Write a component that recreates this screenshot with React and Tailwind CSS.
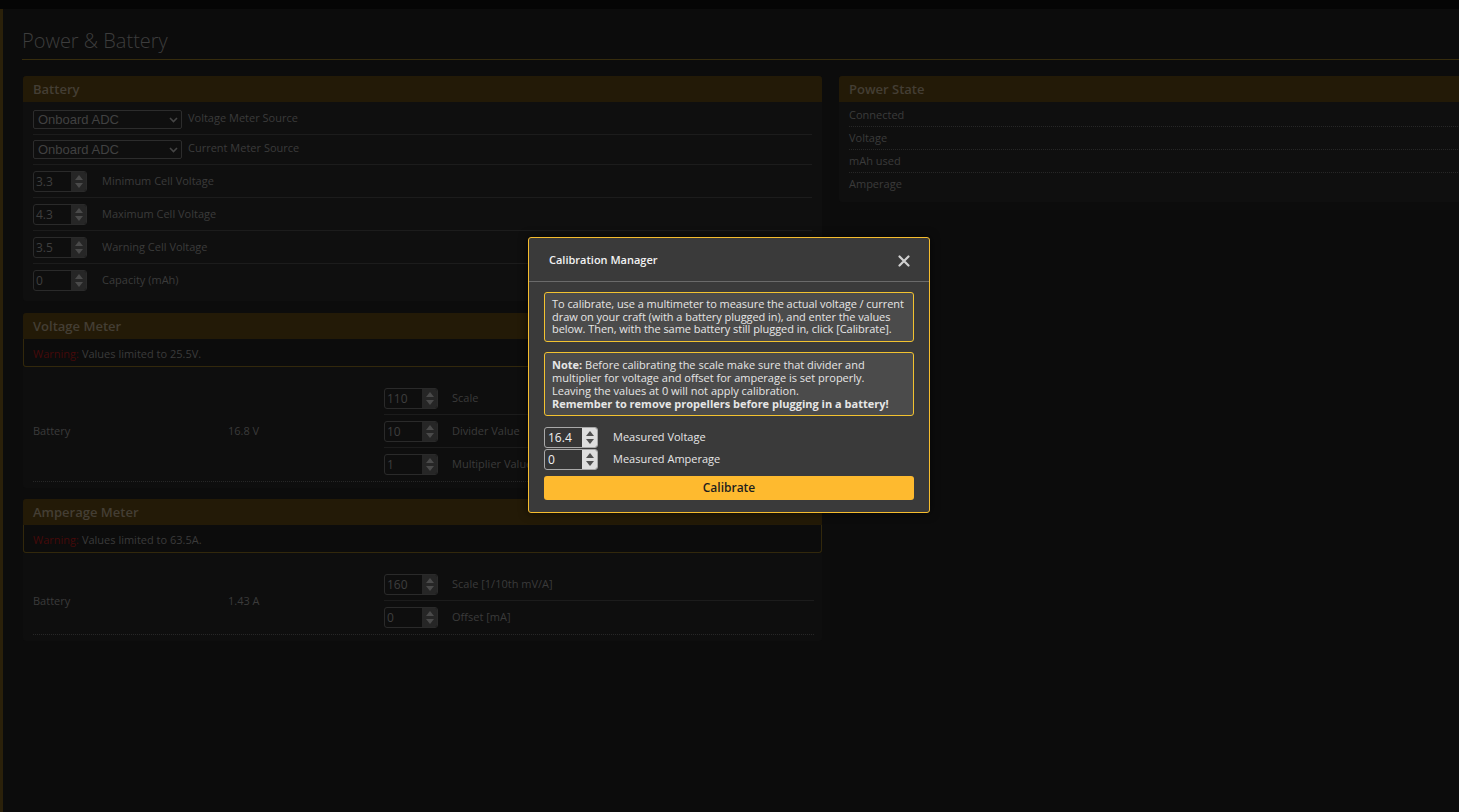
import React from "react";

const Spin = ({ light }) => (
  <div
    className={`flex flex-col items-center justify-center gap-[3px] w-[15px] self-stretch ${
      light ? "bg-[#dedede]" : "bg-[#262626]"
    }`}
  >
    <svg width="8" height="5" viewBox="0 0 8 5">
      <path d="M0 5 L4 0 L8 5Z" fill={light ? "#505050" : "#4a4a4a"} />
    </svg>
    <svg width="8" height="5" viewBox="0 0 8 5">
      <path d="M0 0 L8 0 L4 5Z" fill={light ? "#505050" : "#4a4a4a"} />
    </svg>
  </div>
);

const NumBox = ({ value }) => (
  <div className="flex h-[21px] w-[54px] shrink-0 rounded-[3px] border border-[#2a2a2a] bg-[#0e0e0e] overflow-hidden">
    <span className="flex-1 pl-[2px] text-[12px] leading-[19px] text-[#3e3e3e]">{value}</span>
    <Spin />
  </div>
);

const SelectBox = () => (
  <div className="flex items-center justify-between h-[19px] w-[149px] shrink-0 rounded-[2px] border border-[#2c2c2c] bg-[#0f0f0f] pl-[4px] pr-[3px]">
    <span className="font-['Liberation_Sans',sans-serif] text-[13px] text-[#414141] leading-none">Onboard ADC</span>
    <svg width="9" height="6" viewBox="0 0 9 6">
      <path d="M1 1 L4.5 4.5 L8 1" stroke="#454545" strokeWidth="1.6" fill="none" />
    </svg>
  </div>
);

const Header = ({ children }) => (
  <div className="h-[26px] bg-[#231a07] px-[10px] pt-[1px] flex items-center text-[13px] font-semibold text-[#443e34] rounded-t-[3px]">
    {children}
  </div>
);

const Warn = ({ text }) => (
  <div className="h-[28px] border-x border-b border-[#32280c] rounded-b-[3px] px-[9px] pt-[4px] flex items-center text-[11px] text-[#3b3b3b]">
    <span className="text-[#450a0a] mr-[3px]">Warning:</span>
    {text}
  </div>
);

const MeterBlock = ({ name, value, rows }) => (
  <div className="bg-[#0e0e0e] px-[10px] pr-[8px] pt-[15px] pb-[6px] rounded-b-[3px]">
    <div className="flex border-b border-dotted border-[#272727]">
      <div className="w-[195px] flex items-center text-[11px] text-[#3b3b3b]">{name}</div>
      <div className="w-[156px] flex items-center text-[11px] text-[#3b3b3b]">{value}</div>
      <div className="flex-1 flex flex-col">
        {rows.map((r, i) => (
          <div
            key={r.label}
            className={`h-[33px] flex items-center ${i < rows.length - 1 ? "border-b border-[#1c1c1c]" : ""}`}
          >
            <NumBox value={r.value} />
            <span className="ml-[14px] text-[11px] text-[#3b3b3b]">{r.label}</span>
          </div>
        ))}
      </div>
    </div>
  </div>
);

const batteryRows = [
  { value: "3.3", label: "Minimum Cell Voltage" },
  { value: "4.3", label: "Maximum Cell Voltage" },
  { value: "3.5", label: "Warning Cell Voltage" },
  { value: "0", label: "Capacity (mAh)" },
];

const powerRows = ["Connected", "Voltage", "mAh used", "Amperage"];

const App = () => {
  return (
    <div className="relative h-[812px] w-full overflow-hidden bg-[#0c0c0c] font-['Open_Sans',sans-serif]">
      <div className="h-[9px] bg-[#050505]" />
      <div className="flex h-[803px]">
        <div className="w-[3px] bg-[#2b210a] shrink-0" />
        <main className="flex-1 min-w-0 overflow-hidden pl-[20px] pt-[19px]">
          <h1 className="h-[32px] border-b border-[#362c0d] text-[20px] font-light leading-[26px] text-[#3d3d3d] -ml-[1px]">
            Power &amp; Battery
          </h1>
          <div className="flex gap-[17px] mt-[16px]">
            <div className="w-[799px] shrink-0">
              <div className="bg-[#0f0f0f] rounded-[3px]">
                <Header>Battery</Header>
                <div className="px-[10px] pt-[3px] pb-[4px]">
                  <div className="h-[30px] flex items-center border-b border-[#1c1c1c]">
                    <SelectBox />
                    <span className="ml-[6px] text-[11px] text-[#3b3b3b] -mt-[2px]">Voltage Meter Source</span>
                  </div>
                  <div className="h-[30px] flex items-center border-b border-[#1c1c1c]">
                    <SelectBox />
                    <span className="ml-[6px] text-[11px] text-[#3b3b3b] -mt-[2px]">Current Meter Source</span>
                  </div>
                  {batteryRows.map((r, i) => (
                    <div
                      key={r.label}
                      className={`h-[33px] flex items-center ${i < batteryRows.length - 1 ? "border-b border-[#1c1c1c]" : ""}`}
                    >
                      <NumBox value={r.value} />
                      <span className="ml-[15px] text-[11px] text-[#3b3b3b]">{r.label}</span>
                    </div>
                  ))}
                </div>
              </div>

              <div className="mt-[12px]">
                <Header>Voltage Meter</Header>
                <Warn text="Values limited to 25.5V." />
                <MeterBlock
                  name="Battery"
                  value="16.8 V"
                  rows={[
                    { value: "110", label: "Scale" },
                    { value: "10", label: "Divider Value" },
                    { value: "1", label: "Multiplier Value" },
                  ]}
                />
              </div>

              <div className="mt-[11px]">
                <Header>Amperage Meter</Header>
                <Warn text="Values limited to 63.5A." />
                <MeterBlock
                  name="Battery"
                  value="1.43 A"
                  rows={[
                    { value: "160", label: "Scale [1/10th mV/A]" },
                    { value: "0", label: "Offset [mA]" },
                  ]}
                />
              </div>
            </div>

            <div className="w-[799px] shrink-0">
              <div className="bg-[#0f0f0f] rounded-[3px]">
                <Header>Power State</Header>
                <div className="px-[10px] pt-[2px] pb-[6px]">
                  {powerRows.map((r, i) => (
                    <div
                      key={r}
                      className={`h-[23px] flex items-center text-[11px] text-[#3b3b3b] ${
                        i < powerRows.length - 1 ? "border-b border-dotted border-[#272727]" : ""
                      }`}
                    >
                      {r}
                    </div>
                  ))}
                </div>
              </div>
            </div>
          </div>
        </main>
      </div>

      {/* calibration dialog */}
      <div className="absolute top-[237px] left-[528px] w-[402px] rounded-[3px] border border-[#f6bd2e] bg-[#3a3a3a] shadow-[0_0_10px_rgba(0,0,0,0.6)]">
        <div className="h-[44px] flex items-center justify-between pl-[20px] pr-[19px] pt-[2px] border-b border-[#6a6a6a]">
          <span className="text-[11px] font-semibold text-[#f2f2f2]">Calibration Manager</span>
          <svg width="12" height="12" viewBox="0 0 12 12">
            <path d="M1.5 1.5 L10.5 10.5 M10.5 1.5 L1.5 10.5" stroke="#d0d0d0" strokeWidth="2.2" strokeLinecap="round" />
          </svg>
        </div>
        <div className="px-[15px] pt-[10px] pb-[12px]">
          <div className="rounded-[3px] border border-[#f2c230] bg-[#4b4b4b] px-[7px] py-[5px] text-[11px] leading-[12.5px] text-[#e6e6e6] whitespace-nowrap tracking-[-0.05px]">
            To calibrate, use a multimeter to measure the actual voltage / current
            <br />
            draw on your craft (with a battery plugged in), and enter the values
            <br />
            below. Then, with the same battery still plugged in, click [Calibrate].
          </div>
          <div className="mt-[10px] rounded-[3px] border border-[#f2c230] bg-[#4b4b4b] px-[7px] py-[5px] text-[11px] leading-[13px] text-[#e6e6e6] whitespace-nowrap">
            <b className="font-bold">Note:</b> Before calibrating the scale make sure that divider and
            <br />
            multiplier for voltage and offset for amperage is set properly.
            <br />
            Leaving the values at 0 will not apply calibration.
            <br />
            <b className="font-bold">Remember to remove propellers before plugging in a battery!</b>
          </div>
          <div className="mt-[11px] flex flex-col gap-[1px]">
            {[
              { v: "16.4", l: "Measured Voltage" },
              { v: "0", l: "Measured Amperage" },
            ].map((r) => (
              <div key={r.l} className="flex items-center h-[21px]">
                <div className="flex h-[21px] w-[54px] rounded-[3px] border border-[#a9a9a9] bg-[#363636] overflow-hidden">
                  <span className="flex-1 pl-[3px] text-[12px] leading-[19px] text-[#f0f0f0]">{r.v}</span>
                  <Spin light />
                </div>
                <span className="ml-[15px] text-[11px] text-[#e6e6e6]">{r.l}</span>
              </div>
            ))}
          </div>
          <button className="mt-[6px] w-full h-[24px] rounded-[3px] bg-[#feba2f] text-[12px] font-semibold text-[#1e1e1e]">
            Calibrate
          </button>
        </div>
      </div>
    </div>
  );
};

export default App;
